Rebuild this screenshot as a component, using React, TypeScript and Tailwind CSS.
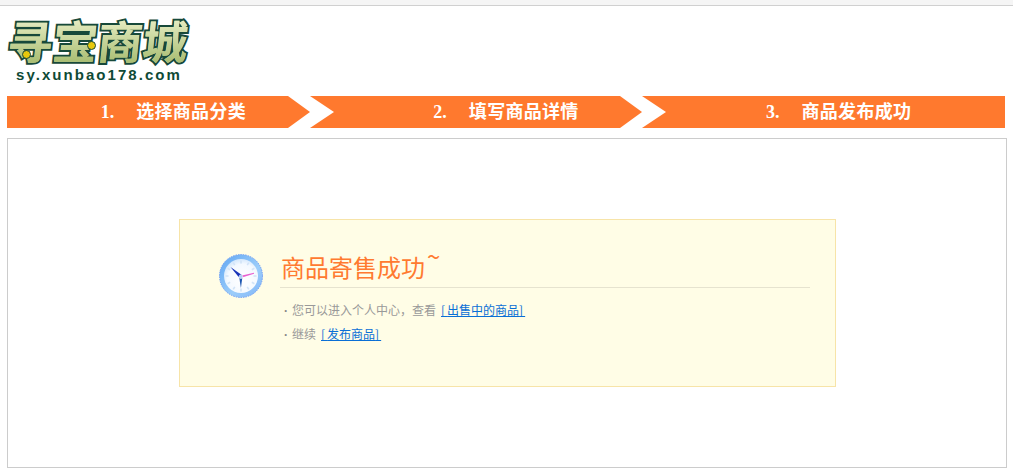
const steps = ['选择商品分类', '填写商品详情', '商品发布成功']

function Chevron() {
  return (
    <svg width="46" height="32" viewBox="0 0 46 32" className="absolute top-0 right-[6px]">
      <polygon points="0,0 22,0 46,16 22,32 0,32 22,16" fill="#ffffff" />
    </svg>
  )
}

function Clock() {
  const ticks = Array.from({ length: 12 }, (_, i) => i * 30)
  return (
    <svg width="44" height="46" viewBox="0 0 44 46" className="shrink-0">
      <defs>
        <linearGradient id="rim" x1="0" y1="0" x2="1" y2="1">
          <stop offset="0" stopColor="#5fa6f2" />
          <stop offset="0.6" stopColor="#9ccdfa" />
          <stop offset="1" stopColor="#7fb4f7" />
        </linearGradient>
        <radialGradient id="face" cx="0.55" cy="0.6" r="0.65">
          <stop offset="0" stopColor="#ffffff" />
          <stop offset="0.7" stopColor="#f4f9ff" />
          <stop offset="1" stopColor="#c9e2fb" />
        </radialGradient>
      </defs>
      <circle cx="22" cy="23" r="21.5" fill="url(#rim)" stroke="#6f9df5" strokeWidth="1" strokeDasharray="1.5 1" />
      <circle cx="22" cy="23" r="17" fill="url(#face)" />
      {ticks.map((deg) => (
        <rect key={deg} x="21.2" y="7.5" width="1.6" height="3" fill="#d3e4f7" transform={`rotate(${deg} 22 23)`} />
      ))}
      <polygon points="11.5,14 23.5,22.5 20.5,25" fill="#1733b8" />
      <polygon points="20.2,24 23.4,24 21.9,35" fill="#1c55b0" />
      <polygon points="23,22.5 35,19.8 35,20.8 23,24.4" fill="#e85fd0" />
      <circle cx="21.9" cy="23.7" r="1.8" fill="#a8cdf0" stroke="#ffffff" strokeWidth="0.6" />
    </svg>
  )
}

export default function App() {
  return (
    <div className="w-[1013px] h-[472px] bg-white overflow-hidden font-['Liberation_Serif','Noto_Sans_CJK_SC',serif]">
      <div className="h-[6px] bg-[#f5f5f5] border-b border-[#d0d0d0]" />

      <div className="pl-[8px] pt-[8px] h-[90px]">
        <div className="relative w-[180px] h-[52px] font-['Noto_Sans_CJK_SC',sans-serif]">
          <div className="text-[45px] leading-[52px] font-bold whitespace-nowrap text-[#c8d596] [-webkit-text-stroke:4px_#17493a] [paint-order:stroke_fill] -skew-x-6">
            寻宝商城
          </div>
          <div
            aria-hidden="true"
            className="absolute left-0 top-0 text-[45px] leading-[52px] font-bold whitespace-nowrap -skew-x-6 bg-gradient-to-b from-[#eef2cc] to-[#a4ba6c] bg-clip-text text-transparent"
          >
            寻宝商城
          </div>
          <span className="absolute left-[14px] top-[36px] w-[9px] h-[9px] rounded-full bg-[#e8c80c] border border-[#17493a]" />
          <span className="absolute left-[79px] top-[27px] w-[9px] h-[9px] rounded-full bg-[#e8c80c] border border-[#17493a]" />
        </div>
        <div className="ml-[8px] mt-[1px] text-[15px] leading-[16px] font-bold tracking-[2.05px] text-[#0f4a36] font-['Liberation_Sans',sans-serif] whitespace-nowrap">
          sy.xunbao178.com
        </div>
      </div>

      <div className="ml-[7px] w-[998px] h-[32px] flex bg-[#ff792e] text-white text-[18px] leading-[32px] font-bold">
        {steps.map((step, index) => (
          <div key={step} className="relative flex-1 flex justify-center gap-[22px] whitespace-nowrap">
            <span>{index + 1}.</span>
            <span className="tracking-[0.3px]">{step}</span>
            {index < 2 && <Chevron />}
          </div>
        ))}
      </div>

      <div className="mt-[10px] ml-[7px] w-[1000px] h-[330px] border border-[#cccccc] pt-[80px] pl-[171px]">
        <div className="w-[657px] h-[168px] bg-[#fffde6] border border-[#f7e4a8] pt-[33px] pl-[39px] pr-[25px] flex gap-[17px]">
          <Clock />
          <div className="flex-1 font-['Noto_Sans_CJK_SC',sans-serif]">
            <div className="h-[35px] border-b border-[#e6e3cf] text-[24px] leading-[28px] text-[#ff7a30] whitespace-nowrap pl-[1px]">
              商品寄售成功<span className="relative -top-[11px] left-[2px]">~</span>
            </div>
            <div className="mt-[10px] text-[12px] text-[#999999] whitespace-nowrap">
              <p className="h-[24px] leading-[24px]">
                <span className="font-['Liberation_Sans',sans-serif] font-bold text-[#888888] mr-[4px] ml-[4px]">·</span>
                您可以进入个人中心，查看
                <a href="#" className="ml-[5px] text-[#0a6fd6] underline [text-decoration-skip-ink:none]"><span className="tracking-[2px]">[</span>出售中的商品<span className="tracking-[2px]">]</span></a>
              </p>
              <p className="h-[24px] leading-[24px]">
                <span className="font-['Liberation_Sans',sans-serif] font-bold text-[#888888] mr-[4px] ml-[4px]">·</span>
                继续
                <a href="#" className="ml-[5px] text-[#0a6fd6] underline [text-decoration-skip-ink:none]"><span className="tracking-[2px]">[</span>发布商品<span className="tracking-[2px]">]</span></a>
              </p>
            </div>
          </div>
        </div>
      </div>
    </div>
  )
}
